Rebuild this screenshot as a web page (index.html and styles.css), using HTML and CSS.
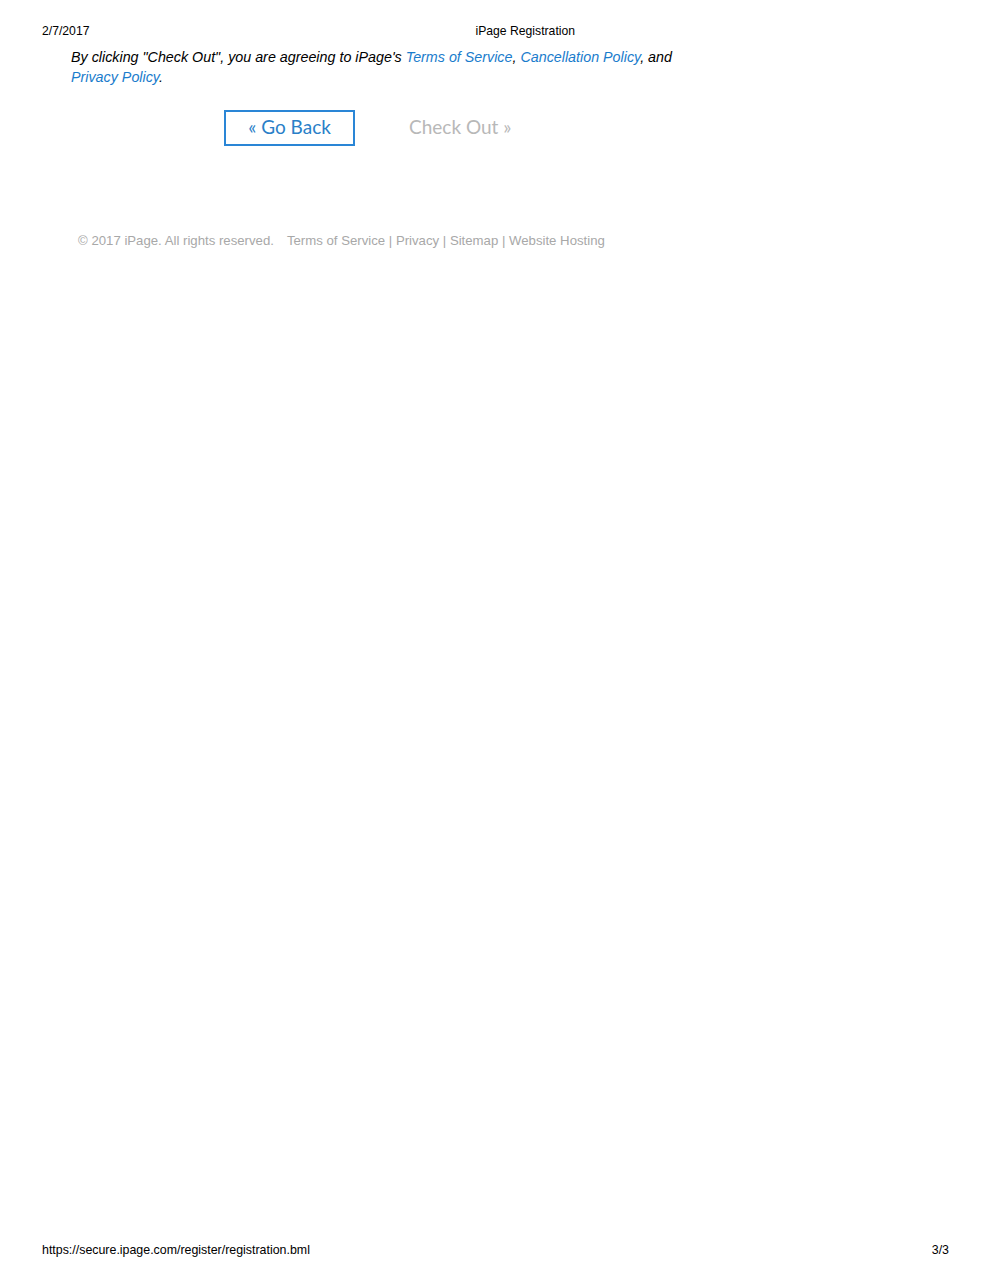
FILE: index.html
```html
<!DOCTYPE html>
<html>
<head>
<meta charset="utf-8">
<title>iPage Registration</title>
<link rel="stylesheet" href="styles.css">
</head>
<body>
<div class="page">
  <header class="print-head">
    <span class="date">2/7/2017</span>
    <span class="title">iPage Registration</span>
  </header>
  <main class="content">
    <p class="agree">By clicking "Check Out", you are agreeing to iPage's <a href="#">Terms of Service</a>, <a href="#">Cancellation Policy</a>, and <a href="#">Privacy Policy</a>.</p>
    <div class="actions">
      <a class="btn back" href="#">« Go Back</a>
      <span class="btn checkout">Check Out »</span>
    </div>
    <footer class="site-foot">
      <span class="copy">© 2017 iPage. All rights reserved.</span>
      <span class="links"><a href="#">Terms of Service</a> | <a href="#">Privacy</a> | <a href="#">Sitemap</a> | <a href="#">Website Hosting</a></span>
    </footer>
  </main>
  <footer class="print-foot">
    <span>https://secure.ipage.com/register/registration.bml</span>
    <span>3/3</span>
  </footer>
</div>
</body>
</html>
```
FILE: styles.css
```css
html, body {
  margin: 0;
  padding: 0;
  background: #fff;
}
.page {
  min-height: 1280px;
  box-sizing: border-box;
  display: flex;
  flex-direction: column;
  font-family: "Liberation Sans", Arial, sans-serif;
  color: #000;
}
.print-head {
  display: flex;
  font-size: 12.2px;
  line-height: 14px;
  padding: 24px 0 0 42px;
}
.print-head .title {
  margin-left: 386px;
}
.content {
  padding-left: 71px;
}
.agree {
  margin: 9px 0 0 0;
  width: 615px;
  font-size: 14.3px;
  line-height: 20px;
  font-style: italic;
}
.agree a {
  color: #1a7ccc;
  text-decoration: none;
}
.actions {
  display: flex;
  align-items: center;
  margin: 23px 0 0 153px;
  gap: 54px;
}
.btn {
  font-family: Lato, "Open Sans", sans-serif;
  font-size: 19px;
  text-decoration: none;
  box-sizing: border-box;
  height: 36px;
  padding-bottom: 3px;
  display: flex;
  align-items: center;
  justify-content: center;
}
.back {
  width: 131px;
  border: 2px solid #2a86d6;
  color: #2a7fc8;
}
.checkout {
  color: #b8b8b8;
}
.site-foot {
  margin: 87px 0 0 7px;
  font-size: 13.2px;
  line-height: 16px;
  color: #a8a8a8;
  display: flex;
  gap: 13px;
}
.site-foot a {
  color: #a8a8a8;
  text-decoration: none;
}
.print-foot {
  margin-top: auto;
  display: flex;
  justify-content: space-between;
  font-size: 12.4px;
  line-height: 14px;
  padding: 0 41px 23px 42px;
}
```
